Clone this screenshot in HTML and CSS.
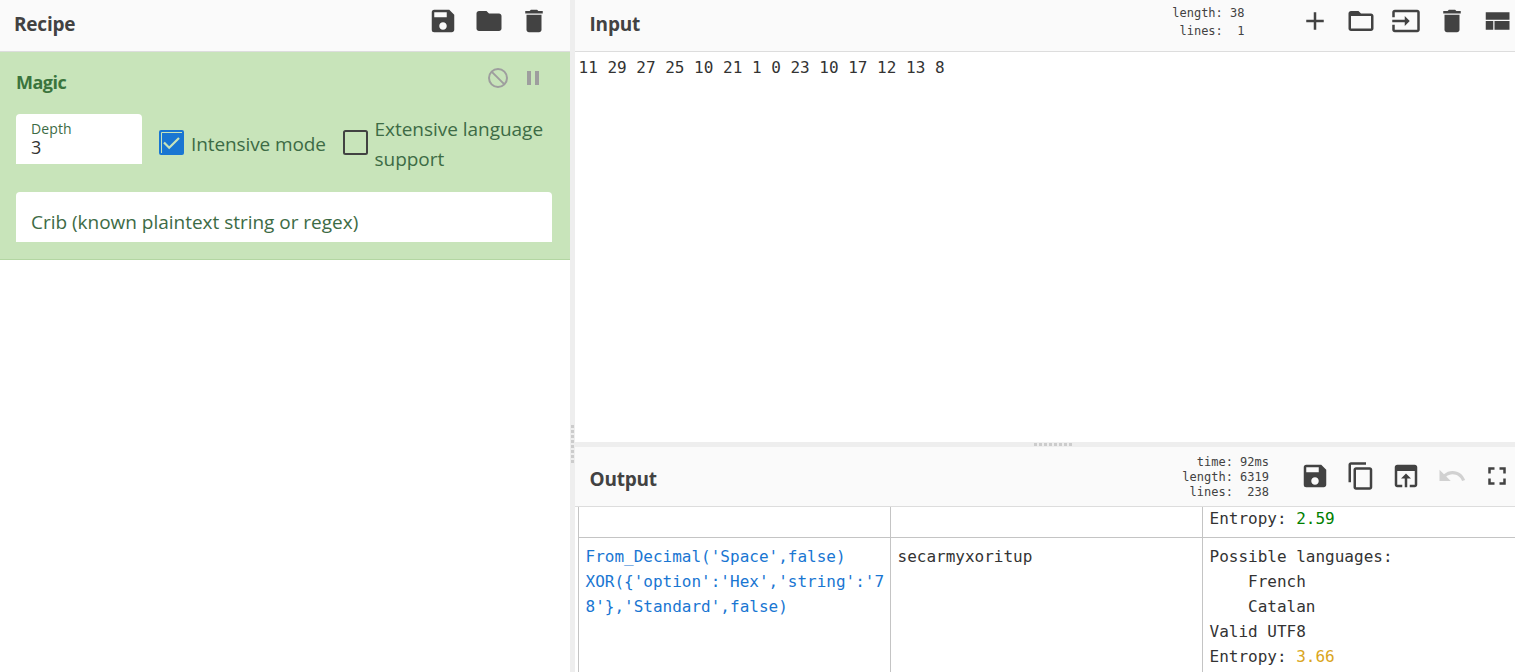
FILE: index.html
```html
<!DOCTYPE html>
<html lang="en">
<head>
<meta charset="utf-8">
<title>Recipe workbench</title>
<link rel="stylesheet" href="styles.css">
</head>
<body>
<div class="workspace">
  <section class="recipe">
    <header class="bar">
      <h1 class="title title-recipe">Recipe</h1>
      <div class="icons">
        <svg class="icon" viewBox="0 0 24 24"><path d="M17 3H5a2 2 0 0 0-2 2v14a2 2 0 0 0 2 2h14c1.100 0 2-.9 2-2V7l-4-4zm-5 16c-1.660 0-3-1.340-3-3s1.340-3 3-3 3 1.340 3 3-1.340 3-3 3zm3-10H5V5h10v4z"/></svg>
        <svg class="icon" viewBox="0 0 24 24"><path d="M10 4H4c-1.100 0-2 .9-2 2v12c0 1.100.9 2 2 2h16c1.100 0 2-.9 2-2V8c0-1.100-.9-2-2-2h-8l-2-2z"/></svg>
        <svg class="icon" viewBox="0 0 24 24"><path d="M6 19c0 1.100.9 2 2 2h8c1.100 0 2-.9 2-2V7H6v12zM19 4h-3.500l-1-1h-5l-1 1H5v2h14V4z"/></svg>
      </div>
    </header>
    <div class="operation">
      <div class="op-head">
        <h2 class="op-title">Magic</h2>
        <div class="op-icons">
          <svg class="op-icon" viewBox="0 0 24 24"><circle cx="12" cy="12" r="9" class="ring"/><path d="M5.600 5.600l12.800 12.800" class="ring"/></svg>
          <svg class="op-icon" viewBox="0 0 24 24"><path d="M6 19h4V5H6v14zm8-14v14h4V5h-4z"/></svg>
        </div>
      </div>
      <div class="args">
        <div class="field depth"><span class="depth-label">Depth</span><span class="depth-value">3</span></div>
        <div class="check check-intensive">
          <svg class="box" viewBox="0 0 25 25"><rect width="25" height="25" rx="2" fill="#1976d2"/><path d="M2.500 23V2.500H23" fill="none" stroke="#c8e4ba"/><path d="M5 12.500l5.200 5.300L20 8" fill="none" stroke="#c8e4ba" stroke-width="2.200"/></svg>
          <span class="text intensive">Intensive mode</span>
        </div>
        <div class="check">
          <svg class="box" viewBox="0 0 25 25"><rect x="1" y="1" width="23" height="23" rx="1.500" fill="none" stroke="#424242" stroke-width="2"/></svg>
          <span class="text language">Extensive language<br>support</span>
        </div>
      </div>
      <div class="field crib"><span class="text crib-label">Crib (known plaintext string or regex)</span></div>
    </div>
  </section>
  <div class="gutter gutter-v"><i class="grip grip-v"></i></div>
  <main class="io">
    <header class="bar">
      <h1 class="title title-input">Input</h1>
      <pre class="stats stats-input">length: 38
 lines:  1</pre>
      <div class="icons">
        <svg class="icon" viewBox="0 0 24 24"><path d="M19 13h-6v6h-2v-6H5v-2h6V5h2v6h6v2z"/></svg>
        <svg class="icon" viewBox="0 0 24 24"><path d="M20 6h-8l-2-2H4c-1.100 0-2 .9-2 2v12c0 1.100.9 2 2 2h16c1.100 0 2-.9 2-2V8c0-1.100-.9-2-2-2zm0 12H4V8h16v10z"/></svg>
        <svg class="icon" viewBox="0 0 24 24"><path d="M21 3H3c-1.100 0-2 .9-2 2v4h2V5h18v14H3v-4H1v4c0 1.100.9 2 2 2h18c1.100 0 2-.9 2-2V5c0-1.100-.9-2-2-2zM11 16l4-4-4-4v3H1v2h10v3z"/></svg>
        <svg class="icon" viewBox="0 0 24 24"><path d="M6 19c0 1.100.9 2 2 2h8c1.100 0 2-.9 2-2V7H6v12zM19 4h-3.500l-1-1h-5l-1 1H5v2h14V4z"/></svg>
        <svg class="icon" viewBox="0 0 24 24"><path d="M3 19h6v-7H3v7zm7 0h12v-7H10v7zM3 5v6h19V5H3z"/></svg>
      </div>
    </header>
    <div class="input-text">11 29 27 25 10 21 1 0 23 10 17 12 13 8</div>
    <div class="gutter gutter-h"><i class="grip grip-h"></i></div>
    <header class="bar bar-output">
      <h1 class="title title-output">Output</h1>
      <pre class="stats stats-output">  time: 92ms
length: 6319
 lines:  238</pre>
      <div class="icons">
        <svg class="icon" viewBox="0 0 24 24"><path d="M17 3H5a2 2 0 0 0-2 2v14a2 2 0 0 0 2 2h14c1.100 0 2-.9 2-2V7l-4-4zm-5 16c-1.660 0-3-1.340-3-3s1.340-3 3-3 3 1.340 3 3-1.340 3-3 3zm3-10H5V5h10v4z"/></svg>
        <svg class="icon" viewBox="0 0 24 24"><path d="M16 1H4c-1.100 0-2 .9-2 2v14h2V3h12V1zm3 4H8c-1.100 0-2 .9-2 2v14c0 1.100.9 2 2 2h11c1.100 0 2-.9 2-2V7c0-1.100-.9-2-2-2zm0 16H8V7h11v14z"/></svg>
        <svg class="icon" viewBox="0 0 24 24"><path d="M19 3H5c-1.110 0-2 .9-2 2v14c0 1.100.89 2 2 2h4v-2H5V8h14v11h-4v2h4c1.100 0 2-.9 2-2V5c0-1.100-.89-2-2-2zm-7 7l-4 4h3v7h2v-7h3l-4-4z"/></svg>
        <svg class="icon disabled" viewBox="0 0 24 24"><path d="M12.500 8c-2.650 0-5.050.99-6.900 2.600L2 7v9h9l-3.620-3.620c1.390-1.160 3.160-1.880 5.120-1.880 3.540 0 6.550 2.310 7.600 5.500l2.370-.78C21.080 11.030 17.150 8 12.500 8z"/></svg>
        <svg class="icon" viewBox="0 0 24 24"><path d="M7 14H5v5h5v-2H7v-3zM5 10h2V7h3V5H5v5zm12 7h-3v2h5v-5h-2v3zM14 5v2h3v3h2V5h-5z"/></svg>
      </div>
    </header>
    <div class="results">
      <div class="cell last"></div>
      <div class="cell last"></div>
      <div class="cell last"><div class="line-up">Entropy: <span class="low">2.59</span></div></div>
      <div class="cell link">From_Decimal('Space',false)
XOR({'option':'Hex','string':'78'},'Standard',false)</div>
      <div class="cell">secarmyxoritup</div>
      <div class="cell"><div>Possible languages:
    French
    Catalan
Valid UTF8</div><div>Entropy: <span class="mid">3.66</span></div></div>
    </div>
  </main>
</div>
</body>
</html>
```
FILE: styles.css
```css
* { box-sizing: border-box; }
body { margin: 0; background: #fff; font-family: "Open Sans", "Noto Sans", sans-serif; color: #424242; overflow: hidden; }
.workspace { display: grid; grid-template-columns: 570px 5px 940px; height: 672px; }
.io { display: flex; flex-direction: column; min-width: 0; }
.bar { display: flex; height: 52px; background: #fafafa; border-bottom: 1px solid #ddd; flex: none; }
.title { margin: 0; padding-top: 9px; font-size: 19px; line-height: 30px; font-weight: 700; flex: 1; white-space: nowrap; }
.title-recipe { padding-left: 14px; letter-spacing: -0.200px; }
.title-input, .title-output { padding-left: 14.500px; letter-spacing: -.2px; }
.icons { display: flex; gap: 15.500px; padding: 6px 3px 0 0; }
.recipe .icons { padding-right: 21px; }
.icon { width: 30px; height: 30px; fill: #424242; display: block; }
.disabled { opacity: .22; }
.operation { height: 208px; background: #c8e4ba; border-bottom: 1px solid #b3d6a2; padding: 14px 18px 0 16px; }
.op-head { display: flex; justify-content: space-between; height: 48px; }
.op-title { margin: 0; font-size: 18px; line-height: 33px; color: #3a743d; letter-spacing: -.5px; }
.op-icons { display: flex; gap: 11px; padding-right: 7px; }
.op-icon { width: 24px; height: 24px; fill: #9e9e9e; }
.ring { fill: none; stroke: #9e9e9e; stroke-width: 2; }
.args { display: flex; height: 78px; }
.field { background: #fff; border-radius: 4px 4px 0 0; color: #3d6b45; }
.depth { width: 126px; height: 50px; padding: 5px 15px; display: flex; flex-direction: column; }
.depth-label { font-size: 14px; line-height: 19px; letter-spacing: .1px; }
.depth-value { font-size: 18px; line-height: 18px; color: #333; }
.check { display: flex; padding-top: 16px; }
.check-intensive { width: 184px; margin-left: 17px; }
.box { width: 25px; height: 25px; flex: none; }
.text { font-size: 19px; line-height: 30px; white-space: nowrap; color: #3d6b45; }
.intensive { margin: -1px 0 0 7px; letter-spacing: -.1px; }
.language { margin: -16px 0 0 6.500px; letter-spacing: -.03px; }
.crib { height: 50px; padding: 15px 15px 0; }
.crib-label { display: block; letter-spacing: -.02px; }
.gutter { background: #eee; display: flex; align-items: center; justify-content: center; flex: none; }
.gutter-v { padding-top: 214px; }
.gutter-h { height: 5px; }
.grip-v { width: 3px; height: 38px; background: repeating-linear-gradient(#ccc 0 3px, #eee 3px 5px); }
.grip-h { width: 38px; height: 3px; margin-left: 16px; background: repeating-linear-gradient(90deg, #ccc 0 3px, #eee 3px 5px); }
.input-text { height: 390px; padding: 3px 3.500px; font: 16px/25px "DejaVu Sans Mono", monospace; color: #333; flex: none; }
.stats { margin: 0; font-family: "DejaVu Sans Mono", monospace; font-size: 12px; color: #424242; }
.stats-input { padding: 4px 55.500px 0 0; line-height: 18px; }
.bar-output { height: 60px; }
.bar-output .title { padding-top: 17px; }
.bar-output .icons { padding-top: 14px; }
.stats-output { padding: 8px 31px 0 0; line-height: 15px; }
.results { display: grid; grid-template-columns: 312px 312px 330px; grid-template-rows: 31px 135px; margin-left: 3px; flex: none; height: 166px; width: 937px; overflow: hidden; }
.cell { border-left: 1px solid #c4c4c4; padding: 6px 6px 0 6.500px; font: 16px/25px "DejaVu Sans Mono", monospace; white-space: pre-wrap; word-break: break-all; color: #333; }
.last { border-bottom: 1px solid #c4c4c4; padding-top: 0; }
.line-up { margin-top: -1px; }
.link { color: #1976d2; padding-right: 5px; }
.low { color: #008000; }
.mid { color: #daa520; }
```
